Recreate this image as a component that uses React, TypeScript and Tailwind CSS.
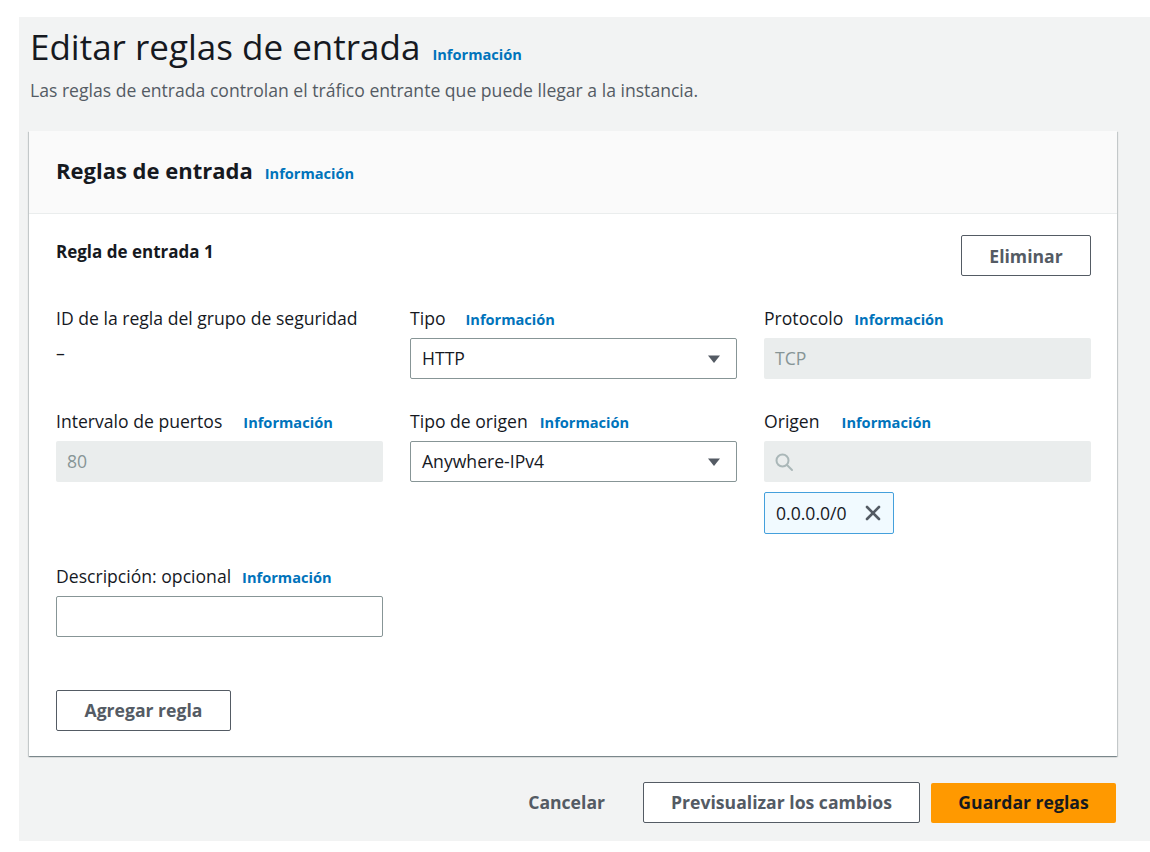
import { X } from "lucide-react"

const info = "text-[14.6px] font-bold text-[#0073bb] leading-[22px]"

function Info({ gap = "ml-3" }: { gap?: string }) {
  return <span className={`${info} ${gap}`}>Información</span>
}

function FieldLabel({ text, gap }: { text: string; gap?: string }) {
  return (
    <div className="flex items-baseline text-[17.6px] leading-[22px] text-[#16191f]">
      <span>{text}</span>
      <Info gap={gap} />
    </div>
  )
}

function Select({ value }: { value: string }) {
  return (
    <div className="mt-2 flex h-[41px] items-center justify-between rounded-[2px] border border-[#879596] bg-white pl-[11px] pr-[15px] text-[17.6px] text-[#16191f]">
      <span>{value}</span>
      <svg width="14" height="10" viewBox="0 0 14 10">
        <path d="M1 1.5h12L7 9z" fill="#545b64" />
      </svg>
    </div>
  )
}

function Disabled({ value }: { value: string }) {
  return (
    <div className="mt-2 flex h-[41px] items-center rounded-[2px] bg-[#eaeded] px-[11px] text-[17.6px] text-[#879596]">
      {value}
    </div>
  )
}

function Button({ children, className = "" }: { children: React.ReactNode; className?: string }) {
  return (
    <button
      className={`flex h-[41px] items-center justify-center rounded-[2px] border border-[#545b64] bg-white text-[17.6px] font-bold text-[#545b64] ${className}`}
    >
      {children}
    </button>
  )
}

export default function App() {
  return (
    <div className="min-h-[852px] bg-white pt-[17px] font-['Open_Sans',sans-serif]">
      <div className="ml-[19px] h-[824px] bg-[#f2f3f3] pl-[10px] pr-[33px] pt-[10px]">
        <div className="flex items-baseline pl-[1px]">
          <h1 className="text-[35px] leading-[40px] font-normal text-[#16191f]">Editar reglas de entrada</h1>
          <Info />
        </div>
        <p className="mt-[12px] pl-[1px] text-[17.6px] leading-[22px] text-[#545b64]">
          Las reglas de entrada controlan el tráfico entrante que puede llegar a la instancia.
        </p>

        <div className="mt-[30px] bg-white shadow-[0_1px_1px_0_rgba(0,28,36,0.3),1px_1px_1px_0_rgba(0,28,36,0.15),-1px_1px_1px_0_rgba(0,28,36,0.15)]">
          <div className="flex h-[83px] items-center border-b border-[#eaeded] bg-[#fafafa] px-[27px] pb-[3px]">
            <div className="flex items-baseline">
              <h2 className="text-[22px] leading-[26px] font-bold text-[#16191f]">Reglas de entrada</h2>
              <Info />
            </div>
          </div>

          <div className="px-[26px] pb-[25px] pl-[27px] pt-[21px]">
            <div className="flex items-start justify-between">
              <h3 className="pt-[6px] text-[17px] leading-[22px] font-bold text-[#16191f]">Regla de entrada 1</h3>
              <Button className="w-[130px] pt-[2px]">Eliminar</Button>
            </div>

            <div className="mt-[31px] grid grid-cols-3 gap-x-[27px] gap-y-[31px]">
              <div>
                <div className="text-[17.6px] leading-[22px] text-[#16191f]">ID de la regla del grupo de seguridad</div>
                <div className="mt-[13px] text-[17.6px] leading-[22px] text-[#16191f]">–</div>
              </div>
              <div>
                <FieldLabel text="Tipo" gap="ml-[20px]" />
                <Select value="HTTP" />
              </div>
              <div>
                <FieldLabel text="Protocolo" gap="ml-[11px]" />
                <Disabled value="TCP" />
              </div>

              <div>
                <FieldLabel text="Intervalo de puertos" gap="ml-[21px]" />
                <Disabled value="80" />
              </div>
              <div>
                <FieldLabel text="Tipo de origen" gap="ml-[12px]" />
                <Select value="Anywhere-IPv4" />
              </div>
              <div>
                <FieldLabel text="Origen" gap="ml-[22px]" />
                <div className="mt-2 flex h-[41px] items-center rounded-[2px] bg-[#eaeded] px-[10px]">
                  <svg width="20" height="20" viewBox="0 0 20 20" fill="none" stroke="#aab7b8" strokeWidth="2">
                    <circle cx="8.5" cy="8.5" r="6" />
                    <path d="M13 13l5 5" strokeLinecap="round" />
                  </svg>
                </div>
                <div className="mt-[10px] flex h-[42px] w-[130px] items-center justify-between rounded-[2px] border border-[#44a0dc] bg-[#f1faff] pl-[11px] pr-[8px] text-[17.6px] text-[#16191f]">
                  <span>0.0.0.0/0</span>
                  <X size={24} strokeWidth={2.6} color="#545b64" />
                </div>
              </div>

              <div>
                <FieldLabel text="Descripción: opcional" gap="ml-[11px]" />
                <div className="mt-2 h-[41px] rounded-[2px] border border-[#879596] bg-white" />
              </div>
            </div>

            <Button className="mt-[53px] h-[40px] w-[175px]">Agregar regla</Button>
          </div>
        </div>

        <div className="mt-[26px] flex items-center justify-end gap-[11px] pr-[1px]">
          <button className="h-[40px] px-[27px] text-[17.6px] font-bold text-[#545b64]">Cancelar</button>
          <Button className="h-[40px] w-[277px]">Previsualizar los cambios</Button>
          <button className="h-[40px] w-[185px] rounded-[2px] bg-[#ff9900] text-[17.6px] font-bold text-[#16191f]">
            Guardar reglas
          </button>
        </div>
      </div>
    </div>
  )
}
